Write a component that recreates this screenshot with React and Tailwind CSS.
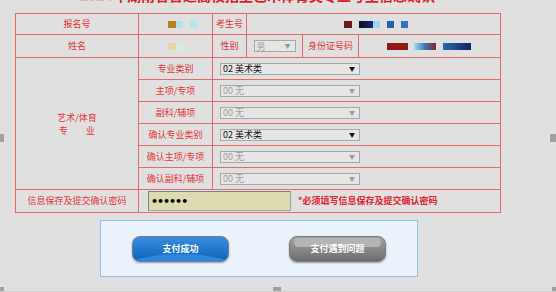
import React from "react";

const F = { fontFamily: '"Noto Sans CJK SC", "Noto Sans", sans-serif' };

function Sel({ text, enabled, w = "w-[140px]" }) {
  return (
    <div className={`${w} h-[12px] border border-[#a8a8a8] bg-[#e6e6e6] flex items-center justify-between pl-[2px] pr-[4px] text-left`}>
      <span className={`text-[9px] leading-none ${enabled ? "text-[#111]" : "text-[#a0a0a0]"}`}>{text}</span>
      <span className={`text-[6px] leading-none ${enabled ? "text-[#111]" : "text-[#999]"}`}>▼</span>
    </div>
  );
}

const td = "border border-[#e36a6a] p-0 text-center align-middle text-[9px] text-[#e03434] font-normal";

export default function App() {
  const rows = [
    ["专业类别", "02 美术类", true],
    ["主项/专项", "00 无", false],
    ["副科/辅项", "00 无", false],
    ["确认专业类别", "02 美术类", true],
    ["确认主项/专项", "00 无", false],
    ["确认副科/辅项", "00 无", false],
  ];
  return (
    <div style={F} className="relative w-[556px] h-[292px] bg-[#e0e0e0] overflow-hidden">
      <div className="h-[13px] overflow-hidden w-[485px] ml-[15px]">
        <div className="-mt-[13px] text-center text-[14px] leading-[16px] font-bold text-[#e02020] whitespace-nowrap">
          <span className="text-[#f0a8a8]">2024</span>年湖南省普通高校招生艺术体育类专业考生信息确认
        </div>
      </div>
      <table className="border-collapse table-fixed w-[485px] ml-[15px]">
        <colgroup>
          <col className="w-[123px]" />
          <col className="w-[74px]" />
          <col className="w-[34px]" />
          <col className="w-[56px]" />
          <col className="w-[56px]" />
          <col className="w-[142px]" />
        </colgroup>
        <tbody>
          <tr className="h-[21px]">
            <td className={td}>报名号</td>
            <td className={td}>
              <div className="flex items-center pl-[29px]">
                <div className="w-[8px] h-[7px] bg-[#b8801c]" />
                <div className="w-[7px] h-[7px] bg-[#b0e2ea]" />
                <div className="w-[7px] h-[7px] bg-[#b4e4ec] ml-[7px]" />
              </div>
            </td>
            <td className={td}>考生号</td>
            <td className={td} colSpan={3}>
              <div className="flex items-center pl-[97px]">
                <div className="w-[8px] h-[7px] bg-[#6a1c1c]" />
                <div className="w-[14px] h-[7px] bg-[linear-gradient(to_right,#101010,#1a2a80)] ml-[7px]" />
                <div className="w-[7px] h-[7px] bg-[#a4d2f2]" />
                <div className="w-[7px] h-[7px] bg-[#2264a8] ml-[7px]" />
                <div className="w-[7px] h-[7px] bg-[#3274b8] ml-[7px]" />
              </div>
            </td>
          </tr>
          <tr className="h-[23px]">
            <td className={td}>姓名</td>
            <td className={td}>
              <div className="flex items-center pl-[29px]">
                <div className="w-[8px] h-[7px] bg-[#ecd2a4]" />
                <div className="w-[7px] h-[7px] bg-[#d8ecdc]" />
              </div>
            </td>
            <td className={td}>性别</td>
            <td className={td}>
              <div className="flex justify-center">
                <Sel text="男" enabled={false} w="w-[42px]" />
              </div>
            </td>
            <td className={td}>身份证号码</td>
            <td className={td}>
              <div className="flex items-center pl-[28px]">
                <div className="w-[21px] h-[7px] bg-[#8e1818]" />
                <div className="w-[22px] h-[7px] bg-[linear-gradient(to_right,#a8d8f0,#3a78b8,#8e2020)] ml-[6px]" />
                <div className="w-[28px] h-[7px] bg-[linear-gradient(to_right,#2a6ab0,#141e6a)] ml-[7px]" />
              </div>
            </td>
          </tr>
          {rows.map(([label, val, en], i) => (
            <tr key={i} className="h-[22px]">
              {i === 0 && (
                <td className={td} rowSpan={6}>
                  <div className="leading-[13px]">
                    艺术/体育
                    <br />
                    专　　业
                  </div>
                </td>
              )}
              <td className={td}>{label}</td>
              <td className={td} colSpan={4}>
                <div className="pl-[7px]">
                  <Sel text={val} enabled={en} />
                </div>
              </td>
            </tr>
          ))}
          <tr className="h-[23px]">
            <td className={td}>信息保存及提交确认密码</td>
            <td className={td} colSpan={5}>
              <div className="flex items-center pl-[9px]">
                <div className="w-[143px] h-[20px] bg-[#dcdcae] border border-[#a0a0a0] border-t-[#808080] border-l-[#808080] flex items-center pl-[2px]">
                  <span className="text-[11px] text-black font-bold tracking-[-1px] leading-none" style={{ fontFamily: '"DejaVu Sans", sans-serif' }}>••••••</span>
                </div>
                <span className="ml-[7px] text-[9px] font-bold text-[#e0202c]">*必须填写信息保存及提交确认密码</span>
              </div>
            </td>
          </tr>
        </tbody>
      </table>
      <div className="mt-[7px] ml-[100px] w-[318px] h-[57px] border border-[#8ec0f0] bg-[#eaf2fc] flex items-start pt-[15px] pl-[31px]">
        <div className="relative w-[97px] h-[26px] rounded-[8px] border border-[#7a7a7a] bg-[linear-gradient(to_bottom,#3a8ee0,#0c62bc)] shadow-[0_1px_2px_rgba(0,0,0,0.35)] overflow-hidden flex items-center justify-center">
          <div className="absolute left-[-10px] right-[-10px] top-[17px] h-[30px] rounded-[50%] bg-[#2a86e2]" />
          <span className="relative text-white font-bold text-[9px]">支付成功</span>
        </div>
        <div className="relative ml-[60px] w-[97px] h-[26px] rounded-[8px] border border-[#7a7a7a] bg-[linear-gradient(to_bottom,#a4a4a4,#6c6c6c)] shadow-[0_1px_2px_rgba(0,0,0,0.35)] overflow-hidden flex items-center justify-center">
          <div className="absolute left-[4px] right-[4px] top-[1px] h-[9px] rounded-[6px] bg-[#b4b4b4]" />
          <span className="relative text-white font-bold text-[9px]">支付遇到问题</span>
        </div>
      </div>
      <div className="absolute left-0 top-[134px] w-[4px] h-[8px] bg-[#a0a0a0]" />
      <div className="absolute right-0 top-[134px] w-[6px] h-[8px] bg-[#a0a0a0]" />
      <div className="absolute left-0 bottom-0 w-[4px] h-[5px] bg-[#a0a0a0]" />
      <div className="absolute left-[273px] bottom-0 w-[8px] h-[5px] bg-[#a0a0a0]" />
      <div className="absolute right-0 bottom-0 w-[4px] h-[5px] bg-[#a0a0a0]" />
      <div className="absolute left-0 right-0 bottom-0 h-[1px] bg-[#cfcfcf]" />
    </div>
  );
}
